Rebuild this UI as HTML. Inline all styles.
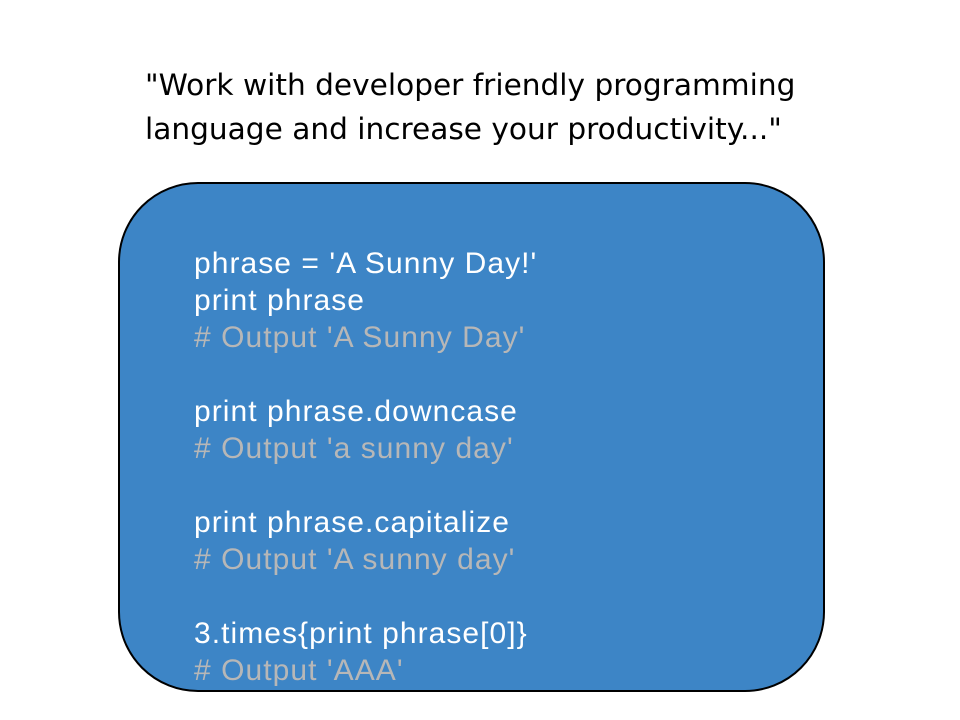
<!DOCTYPE html>
<html><head><meta charset="utf-8"><style>
html,body{margin:0;padding:0;background:#fff;width:960px;height:720px;overflow:hidden;position:relative}
.h{position:absolute;left:145px;top:63px;font-family:"Comic Sans MS","DejaVu Sans",sans-serif;font-size:29.6px;line-height:44px;color:#000;white-space:nowrap}
.box{position:absolute;left:118px;top:182px;width:707px;height:510px;background:#3d85c6;border:2px solid #000;border-radius:80px;box-sizing:border-box}
.code{position:absolute;left:194px;top:245px;font-family:"Liberation Sans",sans-serif;font-size:30px;letter-spacing:1.05px;line-height:37px;color:#fff;white-space:pre}
.c{color:#b7b7b7}
</style></head><body>
<div class="h">"Work with developer friendly programming<br>language and increase your productivity..."</div>
<div class="box"></div>
<div class="code">phrase = 'A Sunny Day!'
print phrase
<span class="c"># Output 'A Sunny Day'</span>

print phrase.downcase
<span class="c"># Output 'a sunny day'</span>

print phrase.capitalize
<span class="c"># Output 'A sunny day'</span>

3.times{print phrase[0]}
<span class="c"># Output 'AAA'</span></div>
</body></html>
